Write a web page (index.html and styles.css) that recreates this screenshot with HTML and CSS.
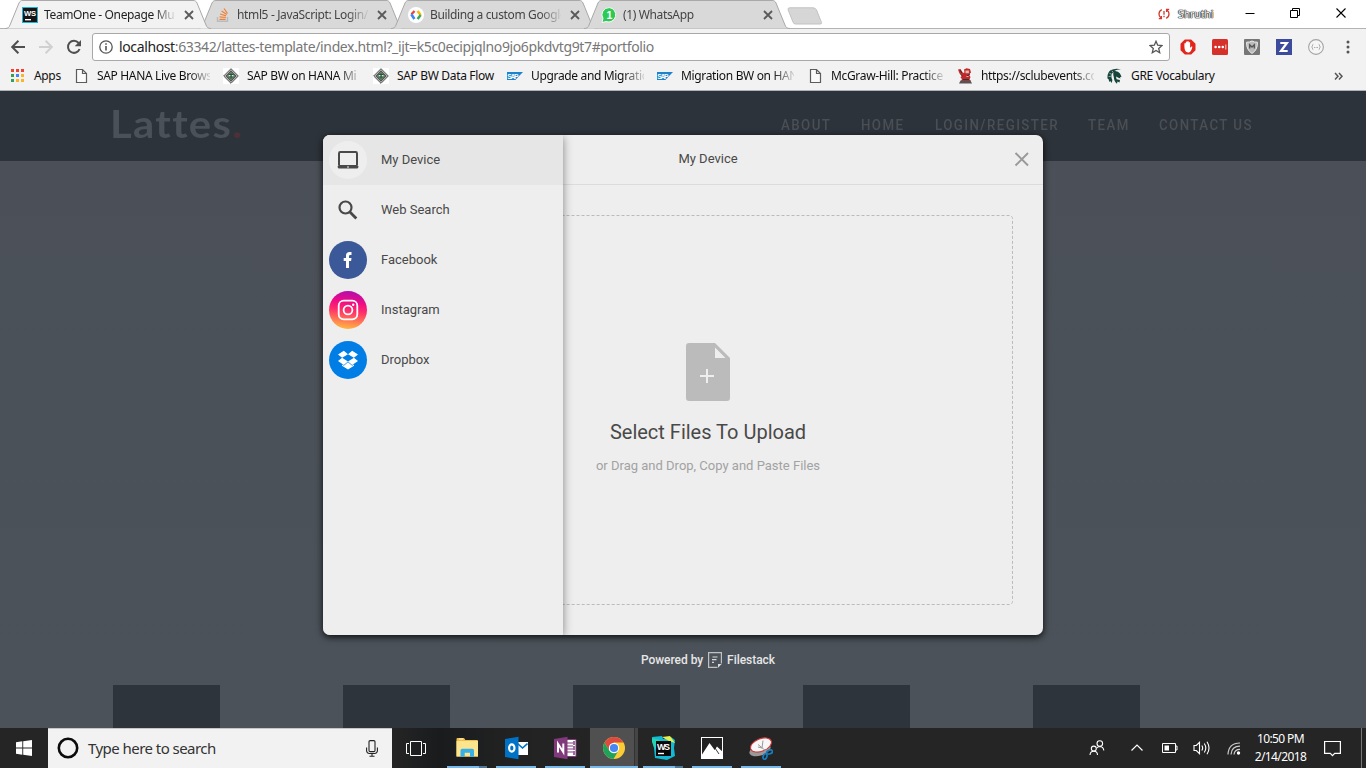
FILE: index.html
```html
<!DOCTYPE html>
<html lang="en">
<head>
<meta charset="utf-8">
<title>TeamOne - Onepage</title>
<link rel="stylesheet" href="styles.css">
</head>
<body>
<svg class="defs" width="0" height="0" aria-hidden="true">
  <defs>
    <linearGradient id="insta" x1="0.55" y1="0" x2="0.42" y2="1"><stop offset="0" stop-color="#b010ad"/><stop offset=".28" stop-color="#ee0b86"/><stop offset=".5" stop-color="#ff2a6c"/><stop offset="1" stop-color="#ffb93f"/></linearGradient>
    <symbol id="tab-shape" viewBox="0 0 206 29"><path d="M0 28.5 C3 28.5 4 27.5 5 25 L14 3 C15 1 16 .5 18 .5 H188 C190 .5 191 1 192 3 L201 25 C202 27.5 203 28.5 206 28.5"/></symbol>
    <symbol id="x" viewBox="0 0 10 10"><path d="M1 1 9 9M9 1 1 9" fill="none" stroke="#5a5a5a" stroke-width="1.8"/></symbol>
    <symbol id="page" viewBox="0 0 16 16"><path d="M3.5 1.5H9.5L13.5 5.5V14.5H3.5ZM9.5 1.5V5.5H13.5" fill="#fafafa" stroke="#5c5c5c" stroke-width="1.2"/></symbol>
    <symbol id="sdn" viewBox="0 0 16 16"><rect width="16" height="16" fill="#fff"/><path d="M8 .7 15.3 8 8 15.3 .7 8Z" fill="#f2f2f2" stroke="#444" /><path d="M8 3 13 8 8 13 3 8Z" fill="#6f9a7b" stroke="#555" stroke-width="1.3"/><path d="M5.5 6.5h5M5.5 9h5M8 5v6" stroke="#2d5238" stroke-width="1"/><path d="M6 7.7h1.3M9 7.7h1.3" stroke="#fff"/></symbol>
    <symbol id="sap" viewBox="0 0 16 16"><path d="M0 4H16L8.3 12H0Z" fill="#1b84cc"/><text x=".2" y="10.6" font-family="Liberation Sans" font-size="6.8" font-weight="700" fill="#fff" textLength="11">SAP</text></symbol>
    <symbol id="ws" viewBox="0 0 16 16"><rect width="16" height="16" fill="#18b5d8"/><rect x="1" y="1" width="14" height="14" fill="#151515"/><text x="2" y="8.6" font-family="Liberation Sans" font-size="7.6" font-weight="700" fill="#fff" textLength="12">WS</text><path d="M3 12h6v1.4H3z" fill="#fff"/></symbol>
  </defs>
</svg>

<header class="tabs">
  <div class="tab active"><svg class="shape"><use href="#tab-shape"/></svg><svg class="fav"><use href="#ws"/></svg><span class="label">TeamOne - Onepage Mul</span><svg class="close"><use href="#x"/></svg></div>
  <div class="tab"><svg class="shape"><use href="#tab-shape"/></svg><svg class="fav" viewBox="0 0 16 16"><path d="M2.5 10v4.2h10V10" fill="none" stroke="#bcbbbb" stroke-width="1.4"/><path d="M4.5 12.3h6.2M4.6 9.8l6.2.7M5.1 7l6 1.9M6.6 4l5.1 3.4M9 1.5l3.5 5" stroke="#ef8236" stroke-width="1.25"/></svg><span class="label">html5 - JavaScript: Login/</span><svg class="close"><use href="#x"/></svg></div>
  <div class="tab"><svg class="shape"><use href="#tab-shape"/></svg><svg class="fav" viewBox="0 0 16 16"><circle cx="8" cy="8" r="8" fill="#fff"/><path d="M6.5 4 3.5 7.3" stroke="#e94335" stroke-width="2.4"/><path d="M3.3 7.2 6.4 12" stroke="#4285f4" stroke-width="2.6"/><path d="M9.5 4 12.7 8" stroke="#fabb05" stroke-width="2.6"/><path d="M12.7 8 9.6 12" stroke="#34a853" stroke-width="2.5"/></svg><span class="label">Building a custom Google</span><svg class="close"><use href="#x"/></svg></div>
  <div class="tab"><svg class="shape"><use href="#tab-shape"/></svg><svg class="fav" viewBox="0 0 16 16"><path d="M8.3.6A7.2 7.2 0 1 1 5 14.5L1 15.5 2 11.5A7.2 7.2 0 0 1 8.3.6Z" fill="#2dc955" stroke="#fff" stroke-width=".9"/><text x="5.4" y="11.8" font-family="Liberation Sans" font-weight="700" font-size="10.5" fill="#fff">1</text></svg><span class="label">(1) WhatsApp</span><svg class="close"><use href="#x"/></svg></div>
  <svg class="newtab" width="36" height="20" viewBox="0 0 36 20"><path d="M2.5.8H26Q28.5.8 29.5 3L34.5 15.5Q35 17 33 17H8.5Q6.5 17 6 15L1.2 3Q.5.8 2.5.8Z" fill="#d6d6d6" stroke="#c2c2c2"/></svg>
  <div class="profile"><svg width="12" height="12" viewBox="0 0 12 12"><path d="M3.8 1.6Q1 3 1 6 1 8.3 2.6 9.8M8.2 10.4Q11 9 11 6 11 3.7 9.4 2.2M.8 10.7H3.4V8M11.2 1.3H8.6V4" fill="none" stroke="#cf3a2e" stroke-width="1.3"/><path d="M6 3v3.8M6 7.8v1.4" stroke="#cf3a2e" stroke-width="1.3"/></svg><span>Shruthi</span></div>
  <div class="wincontrols">
    <svg width="10" height="12" viewBox="0 0 10 12"><path d="M.5 6.5h9" stroke="#000"/></svg>
    <svg width="11" height="12" viewBox="0 0 11 12"><path d="M.5 3.5h7v7h-7zM2.5 3V1.5h7v7H8" fill="none" stroke="#000"/></svg>
    <svg width="10" height="12" viewBox="0 0 10 12"><path d="M.5 1.5l9 9M9.5 1.5l-9 9" stroke="#000" stroke-width="1.1"/></svg>
  </div>
</header>

<section class="toolbar">
  <div class="navbtns">
    <svg width="16" height="16" viewBox="0 0 16 16"><path d="M15 8H3M8.4 1.8 2.2 8l6.2 6.2" fill="none" stroke="#4f4f4f" stroke-width="2"/></svg>
    <svg width="16" height="16" viewBox="0 0 16 16"><path d="M1 8h12M7.6 1.8 13.8 8l-6.2 6.2" fill="none" stroke="#d0d0d0" stroke-width="2"/></svg>
    <svg width="16" height="16" viewBox="0 0 16 16"><path d="M13.6 10A6 6 0 1 1 12.6 4" fill="none" stroke="#4f4f4f" stroke-width="2"/><path d="M15 1v6.3H8.7Z" fill="#4f4f4f"/></svg>
  </div>
  <div class="omnibox">
    <svg width="14" height="14" viewBox="0 0 14 14"><circle cx="7" cy="7" r="6.2" fill="none" stroke="#555" stroke-width="1.3"/><path d="M7 6v4.5M7 3.3v1.5" stroke="#555" stroke-width="1.6"/></svg>
    <span class="url"><b>localhost</b>:63342/lattes-template/index.html?_ijt=k5c0ecipjqlno9jo6pkdvtg9t7#portfolio</span>
    <svg width="14" height="14" viewBox="0 0 14 14"><path d="M7 1.3 8.7 5.2 13 5.6 9.7 8.4 10.7 12.7 7 10.4 3.3 12.7 4.3 8.4 1 5.6 5.3 5.2Z" fill="none" stroke="#555" stroke-width="1.3"/></svg>
  </div>
  <div class="exts">
    <svg width="16" height="16" viewBox="0 0 16 16"><path d="M4.8.5h6.4l4.3 4.3v6.4l-4.3 4.3H4.8L.5 11.2V4.8Z" fill="#e1261c"/><path d="M4.4 8V4.5q.8-1 1.4 0V7V3q.8-1 1.4 0V7V2.5q.9-.9 1.5 0V7V3.5q.8-.8 1.4 0V9q1.3-2 2.3-1.3Q11.3 13 8.8 13.4 4.6 14 4.4 8Z" fill="#fff"/></svg>
    <svg width="16" height="16" viewBox="0 0 16 16"><rect width="16" height="16" rx="1.5" fill="#d6302a"/><circle cx="3.6" cy="8" r="1.3" fill="#fff"/><circle cx="7.2" cy="8" r="1.3" fill="#fff"/><circle cx="10.8" cy="8" r="1.3" fill="#fff"/><path d="M13.8 5.5v5" stroke="#fff" stroke-width=".8"/></svg>
    <svg width="16" height="16" viewBox="0 0 16 16"><rect width="16" height="16" rx="1" fill="#777"/><path d="M8 2Q10.5 3.4 13.4 3.2 13.8 11 8 14.4 2.2 11 2.6 3.2 5.5 3.4 8 2Z" fill="#bbb" stroke="#eee"/><path d="M5.7 9.5V5.8L8 8l2.3-2.2V9.5" fill="none" stroke="#555" stroke-width="1.3"/></svg>
    <svg width="16" height="16" viewBox="0 0 16 16"><rect width="16" height="16" fill="#3d4b9d"/><path d="M4.3 4h6.6L5 12h6.7" fill="none" stroke="#fff" stroke-width="2.2"/></svg>
    <svg width="16" height="16" viewBox="0 0 16 16"><circle cx="8" cy="8" r="7.4" fill="#f6f6f6" stroke="#a4a4a4" stroke-width="1.1"/><path d="M5.3 5.3Q4.3 5.3 4.5 7L3.6 8l.9 1Q4.3 10.7 5.3 10.7M10.7 5.3Q11.7 5.3 11.5 7l.9 1-.9 1Q11.7 10.7 10.7 10.7" fill="none" stroke="#999" stroke-width=".8"/><path d="M6.2 8.5h.8M7.7 8.5h.8M9.2 8.5h.8" stroke="#999"/></svg>
    <svg class="kebab" width="16" height="16" viewBox="0 0 16 16"><circle cx="8" cy="3" r="1.5" fill="#555"/><circle cx="8" cy="8" r="1.5" fill="#555"/><circle cx="8" cy="13" r="1.5" fill="#555"/></svg>
  </div>
</section>

<nav class="bookmarks">
  <div class="bm apps"><svg viewBox="0 0 16 16"><path d="M1 1h3v3H1zM6 1h3v3H6zM11 1h3v3h-3z" fill="#ec4335"/><path d="M1 6h3v3H1zM1 11h3v3H1z" fill="#35a04f"/><path d="M6 6h3v3H6z" fill="#4285f4"/><path d="M11 6h3v3h-3zM6 11h3v3H6zM11 11h3v3h-3z" fill="#fbb42a"/></svg><span>Apps</span></div>
  <div class="bm"><svg><use href="#page"/></svg><span class="fade">SAP HANA Live Brows</span></div>
  <div class="bm"><svg><use href="#sdn"/></svg><span class="fade">SAP BW on HANA Mi</span></div>
  <div class="bm dataflow"><svg><use href="#sdn"/></svg><span>SAP BW Data Flow</span></div>
  <div class="bm"><svg><use href="#sap"/></svg><span class="fade">Upgrade and Migratio</span></div>
  <div class="bm"><svg><use href="#sap"/></svg><span class="fade">Migration BW on HAN</span></div>
  <div class="bm"><svg><use href="#page"/></svg><span class="fade">McGraw-Hill: Practice</span></div>
  <div class="bm"><svg viewBox="0 0 16 16"><path d="M1 1.5 3.5 1 6 5 7.5 4.5 7 1.5 9.5.3 13 1 14 4.5 12 6.5 13.5 9 12.5 11.5 14 13H4L5 11 3.5 9.5 5 7.5 2.5 5.5Z" fill="#c42828"/><path d="M3.5 6.5l2 1.5M3 2l2 3M13 6l-3 2M6 11.5h6" stroke="#333" stroke-width="1" fill="none"/><path d="M2 15.5 3.5 12.5H13.5L15 15.5Z" fill="#555"/><path d="M8.5 2.6h3.4v2.6H8.5zM9.5 8h2v1h-2z" fill="#d8bdb2"/></svg><span class="fade">https://sclubevents.co</span></div>
  <div class="bm"><svg viewBox="0 0 16 16"><path d="M.5 10.5Q0 5 3.5 2.3 8 -.3 14 1.2 9.5 1.5 7.3 3 11 2.6 13 5.5L14.5 8.7 13 9.3 13.5 10.6 11.5 9.8 9 8.6 9.6 11.2 13 12 12.5 14.5 10.5 13.5 10 15.8Q7 13.5 6.8 9 5.8 5.8 6.5 4 4.6 5.4 4.4 7.6 4.2 10.2 5.4 12L4.7 15 3.2 13 2.3 14 1.6 11.3Z" fill="#18453b"/><path d="M1.6 8.6 4 8.2M2.5 5.4 4.7 6.2M4.8 2.8 6 4.2" fill="none" stroke="#f2f2f2" stroke-width=".6"/></svg><span>GRE Vocabulary</span></div>
  <svg class="more" width="9" height="9" viewBox="0 0 9 9"><path d="M1 1l3 3.2L1 7.4M5 1l3 3.2L5 7.4" fill="none" stroke="#555" stroke-width="1.5"/></svg>
</nav>

<main class="site">
  <div class="sitehead">
    <div class="brand">Lattes<i>.</i></div>
    <div class="menu"><a class="m1">ABOUT</a><a class="m2">HOME</a><a class="m3">LOGIN/REGISTER</a><a class="m4">TEAM</a><a class="m5">CONTACT US</a></div>
  </div>
  <div class="blocks"><div></div><div></div><div></div><div></div><div></div></div>

  <div class="overlay">
    <div class="modal">
      <aside class="sources">
        <div class="source selected"><svg viewBox="0 0 38 38"><circle cx="19" cy="19" r="19" fill="#eee"/><rect x="10" y="11.1" width="18" height="14" rx="1.3" fill="none" stroke="#494949" stroke-width="2"/><path d="M8.7 25h20.7v1q0 1.6-1.6 1.6H10.3Q8.7 27.6 8.7 26Z" fill="#494949"/><path d="M18 25.4h2v1.2h-2z" fill="#eee"/></svg><span>My Device</span></div>
        <div class="source"><svg viewBox="0 0 38 38"><circle cx="16.5" cy="16.5" r="6" fill="none" stroke="#494949" stroke-width="2.2"/><path d="M20.9 21 27.3 27.4" stroke="#494949" stroke-width="2.8"/></svg><span>Web Search</span></div>
        <div class="source"><svg viewBox="0 0 38 38"><circle cx="19" cy="19" r="19" fill="#3b5998"/><path d="M17 27v-7h-2.3v-3H17v-2.3Q17 11 20.6 11h1.9v3h-1.4Q20 14 20 15.2V17h2.5l-.4 3H20v7Z" fill="#fff"/></svg><span>Facebook</span></div>
        <div class="source"><svg viewBox="0 0 38 38"><circle cx="19" cy="19" r="19" fill="url(#insta)"/><rect x="9.7" y="9.7" width="18.6" height="18.6" rx="5" fill="none" stroke="#fff" stroke-width="1.8"/><circle cx="19" cy="19" r="4.4" fill="none" stroke="#fff" stroke-width="1.8"/><circle cx="24.2" cy="13.8" r="1.2" fill="#fff"/></svg><span>Instagram</span></div>
        <div class="source"><svg viewBox="0 0 38 38"><circle cx="19" cy="19" r="19" fill="#007ee5"/><path d="M14.8 9.8 19 13.2 13.1 16.8 9 13.5ZM23.2 9.8 29 13.5 24.9 16.8 19 13.2ZM13.1 16.8 19 20.4 14.8 23.9 9 20.1ZM24.9 16.8 29 20.1 23.2 23.9 19 20.4ZM19 21.2 23.2 24.7 25 23.5V24.8L19 28.4 13 24.8V23.5L14.8 24.7Z" fill="#fff"/></svg><span>Dropbox</span></div>
      </aside>
      <section class="picker">
        <div class="pickhead"><span>My Device</span><svg width="15" height="15" viewBox="0 0 15 15"><path d="M1.5 1 14 13.5M14 1 1.5 13.5" stroke="#999" stroke-width="1.9"/></svg></div>
        <div class="dropwrap"><div class="drop">
          <svg class="dash" width="610" height="390"><rect x=".5" y=".5" width="609" height="389" rx="3" fill="none" stroke="#bbb" stroke-dasharray="3 2"/></svg>
          <svg width="44" height="58" viewBox="0 0 44 58"><path d="M3 0H29L44 15V55Q44 58 41 58H3Q0 58 0 55V3Q0 0 3 0Z" fill="#bbb"/><path d="M29 4.5V15H39.5Z" fill="#eee"/><path d="M14 33h14M21 26v14" stroke="#eee" stroke-width="2"/></svg>
          <h2>Select Files To Upload</h2>
          <p>or Drag and Drop, Copy and Paste Files</p>
        </div></div>
      </section>
    </div>
    <div class="powered"><span>Powered by</span><svg width="14" height="16" viewBox="0 0 14 16"><path d="M9.5 15.4H.6V.6H13.4V11.5" fill="none" stroke="#bfc1c4" stroke-width="1.2"/><path d="M4.5 5h5M4 7.7h4.5M4 10.4h2" stroke="#d7d8da" stroke-width="1.2"/><path d="M10 12h3.7L10 15.7Z" fill="#ddd"/></svg><span>Filestack</span></div>
  </div>
</main>

<footer class="taskbar">
  <div class="start"><svg width="16" height="16" viewBox="0 0 16 16"><path d="M0 2.2 6.3 1.3V7.5H0ZM7.2 1.2 16 0V7.5H7.2ZM0 8.5H6.3V14.7L0 13.8ZM7.2 8.5H16V16L7.2 14.8Z" fill="#fff"/></svg></div>
  <div class="search"><svg width="22" height="22" viewBox="0 0 22 22"><circle cx="11" cy="11" r="9.2" fill="none" stroke="#0b0b0b" stroke-width="2.6"/></svg><span>Type here to search</span><svg width="12" height="17" viewBox="0 0 12 17"><rect x="3" y=".6" width="6" height="11" rx="1.2" fill="none" stroke="#222" stroke-width="1.1"/><path d="M.6 7.5V11Q1 13.5 3.5 13.5H8.5Q11 13.5 11.4 11V7.5M6 13.5V16M3.5 16.2h5" fill="none" stroke="#222" stroke-width="1.1"/></svg></div>
  <div class="taskview"><svg width="20" height="15" viewBox="0 0 20 15"><path d="M4.5.5h11v14h-11zM3 2.5H.5v10H3M17 2.5h2.5v10H17" fill="none" stroke="#fff"/></svg></div>
  <div class="apps-row">
    <div class="app double"><svg viewBox="0 0 24 24"><path d="M1.5 3Q1.5 2 2.5 2H9l1.4 2H22q1 0 1 1V20.5H1.5Z" fill="#f3bf48"/><path d="M1.5 5H23V20.5H1.5Z" fill="#fde48f"/><path d="M5.5 20.8V14.5q0-1.7 1.7-1.7H17.3q1.7 0 1.7 1.7v6.3H15v-4H9.7v4Z" fill="#36b0e6"/><path d="M4 3h4" stroke="#f8f3de"/></svg></div>
    <div class="app"><svg viewBox="0 0 24 24"><path d="M11 6H24V19H11Z" fill="#fff"/><path d="M13.5 7.5l5 4.5 5-4.5" fill="none" stroke="#0072c6" stroke-width="1.6"/><path d="M1 3 14.5.8V23.2L1 21Z" fill="#0072c6"/><ellipse cx="7.8" cy="12" rx="2.7" ry="3.6" fill="none" stroke="#fff" stroke-width="2.1"/></svg></div>
    <div class="app"><svg viewBox="0 0 24 24"><path d="M12 3.5H23V20.5H12Z" fill="#fff" stroke="#80397b" stroke-width="1"/><path d="M14 7h6M14 10h6M14 13h6M14 16h6" stroke="#80397b" stroke-width="1.2"/><path d="M21 5v4M21 10v4M21 15v4" stroke="#80397b" stroke-width="1.5"/><path d="M1 3 14.5.8V23.2L1 21Z" fill="#80397b"/><path d="M5 16.5V7.8L10.3 16V7.6" fill="none" stroke="#fff" stroke-width="2"/></svg></div>
    <div class="app current"><svg viewBox="0 0 24 24"><circle cx="12" cy="12" r="11" fill="#fbcc34"/><path d="M2.5 6.5A11 11 0 0 1 21.5 6.5H12L7 14Z" fill="#dc4b3e"/><path d="M2.5 6.5A11 11 0 0 0 11.5 23L16.5 14.5 7.5 15Z" fill="#1fa35c"/><circle cx="12" cy="12" r="5.2" fill="#fff"/><circle cx="12" cy="12" r="4.1" fill="#4687f3"/></svg></div>
    <div class="app double"><svg viewBox="0 0 24 24"><path d="M1 1 11 0 12 3 20 1 24 4 23 12 24 20 16 24 4 22 3 12Z" fill="#12bad3"/><path d="M11 1 19 0 24 7 18 5Z" fill="#e8ee4d"/><path d="M4 14 1 6V2l8 2Z" fill="#26d3b2"/><rect x="5" y="5" width="15" height="15" fill="#090909"/><text x="6" y="13.5" font-family="Liberation Sans" font-size="9" font-weight="700" fill="#fff" textLength="13">WS</text><path d="M7 16.8h6v1.4H7z" fill="#fff"/></svg></div>
    <div class="app"><svg viewBox="0 0 24 24"><rect x="1.5" y="1.5" width="21" height="21" fill="#222" stroke="#fff"/><path d="M2 18.5 9.5 7l5.2 7L17 10.5 22.3 15.5V22.3H2Z" fill="#fff"/><path d="M15 12l4 6" stroke="#222" stroke-width=".9"/></svg></div>
    <div class="app"><svg viewBox="0 0 24 24"><ellipse cx="11" cy="14" rx="11" ry="5.6" transform="rotate(-18 11 14)" fill="#999"/><ellipse cx="12" cy="9" rx="11" ry="6.3" transform="rotate(-22 12 9)" fill="#f7f7f7" stroke="#cc3738" stroke-width="1.1"/><path d="M14 4.5 13 12M9 8.5l8 6.5M13 12l-4-1" stroke="#999" stroke-width="1"/><ellipse cx="20.5" cy="16" rx="3" ry="1.9" transform="rotate(-18 20.5 16)" fill="none" stroke="#197cbd" stroke-width="1.7"/><ellipse cx="16" cy="20.5" rx="1.8" ry="2.8" transform="rotate(20 16 20.5)" fill="none" stroke="#197cbd" stroke-width="1.7"/></svg></div>
  </div>
  <div class="tray">
    <svg class="t1" width="16" height="16" viewBox="0 0 16 16"><g fill="none" stroke="#fff" stroke-width="1.1"><circle cx="10.8" cy="3.6" r="2.8"/><circle cx="4.8" cy="8.6" r="2.5"/><path d="M1 15Q1.2 11.2 4.8 11.2T8.5 15M8 8Q9 6.5 10.8 6.5 14.5 6.8 14.8 10.5"/></g></svg>
    <svg class="t2" width="14" height="16" viewBox="0 0 14 16"><path d="M1.5 10.5 7 5l5.5 5.5" fill="none" stroke="#fff" stroke-width="1.2"/></svg>
    <svg class="t3" width="16" height="16" viewBox="0 0 16 16"><path d="M.5 3.5h13v9H.5zM14 6h1v4H14" fill="none" stroke="#fff"/><path d="M2.5 5.5H7v5H2.5z" fill="#fff"/></svg>
    <svg class="t4" width="18" height="16" viewBox="0 0 18 16"><path d="M1 5.5h2.3L6.5 2.3v11.4L3.3 10.5H1zM8.8 5.5q1.7 2.4 0 5M11.3 3.5q3 4.5 0 9M14 1.7q4 6.3 0 12.6" fill="none" stroke="#fff" stroke-width="1.1"/></svg>
    <svg class="t5" width="14" height="16" viewBox="0 0 14 16"><g fill="none" stroke="#ccc" stroke-width="1.2"><path d="M1 14.5Q1.5 3 13 3M4 14.5Q4.5 6.2 13 6.2M7 14.5Q7.5 9.4 13 9.4"/></g><circle cx="11.5" cy="13" r="1.7" fill="#fff"/></svg>
    <div class="clock"><span>10:50 PM</span><span>2/14/2018</span></div>
    <svg class="t6" width="17" height="17" viewBox="0 0 17 17"><path d="M.6 1.5h15.8v11.8H10.7L8.5 15.6 6.3 13.3H.6Z" fill="none" stroke="#fff" stroke-width="1.2"/></svg>
    <div class="peek"></div>
  </div>
</footer>
</body>
</html>
```
FILE: styles.css
```css
* { box-sizing: border-box; }
body { margin: 0; width: 1366px; height: 768px; overflow: hidden; display: flex; flex-direction: column; font-family: "Noto Sans", "Open Sans", sans-serif; background: #4b5159; }
svg { display: block; flex: none; }
.defs { position: absolute; }

/* Browser tab strip */
.tabs { height: 29px; flex: none; display: flex; background: #fff; border-bottom: 1px solid #b3b3b3; padding-left: 5px; }
.tab { position: relative; width: 206px; height: 29px; margin-right: -13px; display: flex; align-items: center; padding-left: 17px; flex: none; z-index: 1; }
.tab.active { z-index: 3; }
.shape { position: absolute; left: 0; top: 0; width: 206px; height: 29px; fill: #d9d9d9; stroke: #a9a9a9; }
.active .shape { fill: #f2f2f2; }
.fav { position: relative; width: 16px; height: 16px; margin-right: 6px; }
.label { position: relative; width: 131px; overflow: hidden; white-space: nowrap; font-size: 12px; letter-spacing: -.36px; color: #444; line-height: 20px; mask-image: linear-gradient(to right, #000 110px, transparent 133px); }
.active .label { color: #222; }
.close { position: relative; width: 10px; height: 10px; margin-left: 9px; }
.newtab { margin: 7px 0 0 10px; }
.profile { display: flex; align-items: center; gap: 8px; height: 27px; margin-left: auto; width: 84px; font-size: 10.5px; letter-spacing: -.1px; color: #fff; text-shadow: 0 0 1px #111, 0 0 1px #111, 0 0 1px #111, 0 0 1px #111; }
.wincontrols { display: flex; gap: 35px; padding: 7px 20px 0 3px; }

/* Toolbar */
.toolbar { height: 36px; flex: none; background: #f2f2f2; display: flex; align-items: center; padding-left: 10px; }
.navbtns { display: flex; gap: 12px; width: 82px; }
.omnibox { width: 1078px; height: 28px; border: 1px solid #a8a8a8; border-radius: 3px; background: #fff; display: flex; align-items: center; padding: 0 6px; }
.url { flex: 1; margin-left: 6px; font-size: 14px; letter-spacing: -.375px; line-height: 24px; color: #777; white-space: nowrap; }
.url b { font-weight: 400; color: #222; }
.exts { display: flex; gap: 16px; padding-left: 10px; }

/* Bookmarks */
.bookmarks { height: 26px; flex: none; background: #f2f2f2; border-bottom: 1px solid #b0b3b5; display: flex; align-items: center; padding: 0 0 3px 10px; }
.bm { display: flex; align-items: center; gap: 8px; width: 150px; flex: none; font-size: 12px; letter-spacing: -.34px; line-height: 18px; color: #111; white-space: nowrap; }
.bm svg { width: 16px; height: 16px; }
.bm.apps { width: 63px; }
.bm.dataflow { width: 134px; }
.fade { width: 113px; overflow: hidden; mask-image: linear-gradient(to right, #000 92px, transparent 116px); }
.more { margin: 1px 23px 0 auto; }

/* Site under the dimming layer */
.site { position: relative; flex: 1; min-height: 0; background: linear-gradient(#4b5058, #4b5259); display: flex; flex-direction: column; justify-content: space-between; }
.sitehead { height: 70px; background: #2d333a; display: flex; justify-content: space-between; padding: 0 113px 0 110px; }
.brand { font: 700 38px/64px Lato, sans-serif; letter-spacing: 1.2px; color: #4b5159; transform: scaleX(1.1); transform-origin: left; }
.brand i { font-style: normal; color: #4e3039; }
.menu { display: flex; gap: 30px; }
.menu a { font: 500 14px/69px Roboto, sans-serif; letter-spacing: 1.5px; color: #4a4f55; white-space: nowrap; transform: scaleX(.95); transform-origin: left; }
.m1 { width: 50px; } .m2 { width: 44px; } .m3 { width: 123px; } .m4 { width: 41px; } .m5 { width: 94px; }
.blocks { display: flex; gap: 123px; padding-left: 113px; height: 43px; }
.blocks div { width: 107px; background: #2d343b; }

/* File picker */
.overlay { position: absolute; inset: 0; display: flex; flex-direction: column; align-items: center; padding-top: 44px; font-family: Roboto, sans-serif; }
.modal { width: 720px; height: 500px; flex: none; background: #eee; border-radius: 7px; overflow: hidden; box-shadow: 0 2px 7px rgba(0,0,0,.85); display: flex; }
.sources { position: relative; z-index: 1; width: 240px; margin-right: -190px; flex: none; background: #eee; box-shadow: 0 2px 9px rgba(0,0,0,.45); }
.source { height: 50px; display: flex; align-items: center; gap: 14px; padding-left: 6px; font-size: 13px; color: #494949; }
.source span { padding-bottom: 2px; }
.source.selected { background: #e6e6e6; }
.source svg { width: 38px; height: 38px; }
.picker { width: 670px; display: flex; flex-direction: column; }
.pickhead { position: relative; height: 50px; border-bottom: 1px solid #dcdcdc; display: flex; align-items: center; justify-content: center; font-size: 13px; color: #494949; padding-bottom: 2px; }
.pickhead svg { position: absolute; right: 14px; top: 17px; }
.dropwrap { padding: 30px; flex: 1; }
.drop { position: relative; width: 610px; height: 390px; display: flex; flex-direction: column; align-items: center; padding-top: 128px; }
.dash { position: absolute; inset: 0; }
.drop h2 { margin: 17px 0 0; font-size: 20px; line-height: 28px; font-weight: 400; color: #494949; }
.drop p { margin: 12px 0 0; font-size: 13px; line-height: 16px; color: #a2a2a2; }
.powered { display: flex; align-items: center; gap: 5px; margin: 17px 0 0 50px; height: 16px; font-size: 12px; letter-spacing: -.04px; font-weight: 500; color: #e6e6e6; }

/* Taskbar */
.taskbar { height: 40px; flex: none; background: linear-gradient(90deg, #252525 0, #252525 390px, #191b1d 440px, #222 510px, #252525 650px); display: flex; }
.start { width: 48px; display: flex; align-items: center; justify-content: center; }
.search { width: 344px; background: #f2f2f2; border-top: 1px solid #c6c6c6; display: flex; align-items: center; padding: 0 14px 1px 9px; }
.search span { flex: 1; margin-left: 9px; padding-bottom: 1px; font-size: 15px; letter-spacing: -.55px; color: #333; white-space: nowrap; }
.taskview { width: 50px; padding: 13px 0 0 14px; }
.apps-row { display: flex; }
.app { width: 49px; padding: 8px 0 0 12.5px; background: linear-gradient(#76b9ed, #76b9ed) 5px 38px / 40px 2px no-repeat; }
.app svg { width: 24px; height: 24px; }
.app.double { background: linear-gradient(90deg, #76b9ed 32px, #4f7799 32px) 5px 38px / 40px 2px no-repeat; }
.app.current { background: linear-gradient(#76b9ed, #76b9ed) 1px 38px / 48px 2px no-repeat, linear-gradient(90deg, transparent 1px, #505050 1px, #505050 45px, #333 45px, #333 46px, #454545 46px); }
.tray { margin-left: auto; display: flex; align-items: center; }
.t1 { margin-right: 25px; }
.t2 { margin-right: 18px; }
.t3 { margin-right: 15px; }
.t4 { margin-right: 16px; }
.t5 { margin-right: 11px; }
.clock { width: 57px; margin-right: 15px; display: flex; flex-direction: column; align-items: center; font-size: 12px; line-height: 18px; letter-spacing: -.6px; color: #fff; white-space: nowrap; }
.t6 { margin-right: 20px; }
.peek { width: 5px; height: 40px; border-left: 1px solid #777; }
```
